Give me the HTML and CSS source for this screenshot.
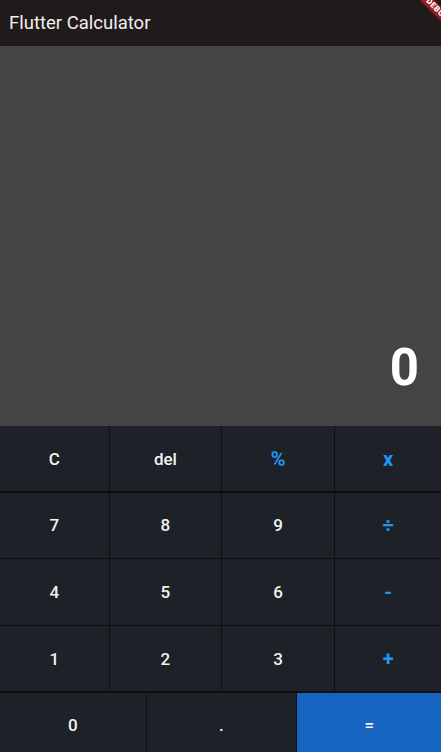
FILE: index.html
```html
<!DOCTYPE html>
<html>
<head>
<meta charset="utf-8">
<link rel="stylesheet" href="styles.css">
</head>
<body>
<div class="app">
  <header class="appbar">Flutter Calculator</header>
  <section class="display"><span class="result">0</span></section>
  <section class="keys">
    <div class="row four">
      <div class="key">C</div>
      <div class="key">del</div>
      <div class="key op">%</div>
      <div class="key op">x</div>
    </div>
    <div class="row four">
      <div class="key">7</div>
      <div class="key">8</div>
      <div class="key">9</div>
      <div class="key op">÷</div>
    </div>
    <div class="row four">
      <div class="key">4</div>
      <div class="key">5</div>
      <div class="key">6</div>
      <div class="key op">-</div>
    </div>
    <div class="row four">
      <div class="key">1</div>
      <div class="key">2</div>
      <div class="key">3</div>
      <div class="key op">+</div>
    </div>
    <div class="row three">
      <div class="key">0</div>
      <div class="key">.</div>
      <div class="key equals">=</div>
    </div>
  </section>
</div>
<div class="debug-banner">DEBUG</div>
</body>
</html>
```
FILE: styles.css
```css
html, body {
  margin: 0;
  padding: 0;
  height: 100%;
  overflow: hidden;
  background: #1e2127;
}
body {
  font-family: Roboto, "Liberation Sans", sans-serif;
  position: relative;
}
.app {
  display: flex;
  flex-direction: column;
}
.appbar {
  height: 46px;
  line-height: 46px;
  background: #201a1b;
  color: #f0eeee;
  font-size: 18.5px;
  font-weight: 400;
  padding-left: 9px;
}
.display {
  height: 380px;
  background: #444444;
  display: flex;
  justify-content: flex-end;
  align-items: flex-end;
  padding: 0 22px 33px 0;
  box-sizing: border-box;
}
.result {
  color: #ffffff;
  font-size: 51px;
  font-weight: 700;
  line-height: 1;
}
.keys {
  display: flex;
  flex-direction: column;
  gap: 1.5px;
  background: #0e0f11;
}
.row {
  display: grid;
  gap: 1.5px;
  height: 65.2px;
}
.row.four { grid-template-columns: 109fr 111fr 112fr 106fr; }
.row.three { grid-template-columns: 146fr 149fr 144fr; }
.key {
  background: #1e2127;
  color: #f2f2f2;
  font-size: 17px;
  font-weight: 500;
  display: flex;
  align-items: center;
  justify-content: center;
}
.key.op {
  color: #2196f3;
  font-size: 20px;
  font-weight: 700;
}
.key.equals {
  background: #1565c0;
  color: #f2f2f2;
}
.debug-banner {
  position: absolute;
  left: 397px;
  top: 4.5px;
  width: 80px;
  height: 10px;
  line-height: 10px;
  transform: rotate(45deg);
  background: rgba(183, 28, 28, 0.85);
  color: #fff;
  font-size: 8px;
  font-weight: 900;
  text-align: center;
  letter-spacing: 0.5px;
}
```
